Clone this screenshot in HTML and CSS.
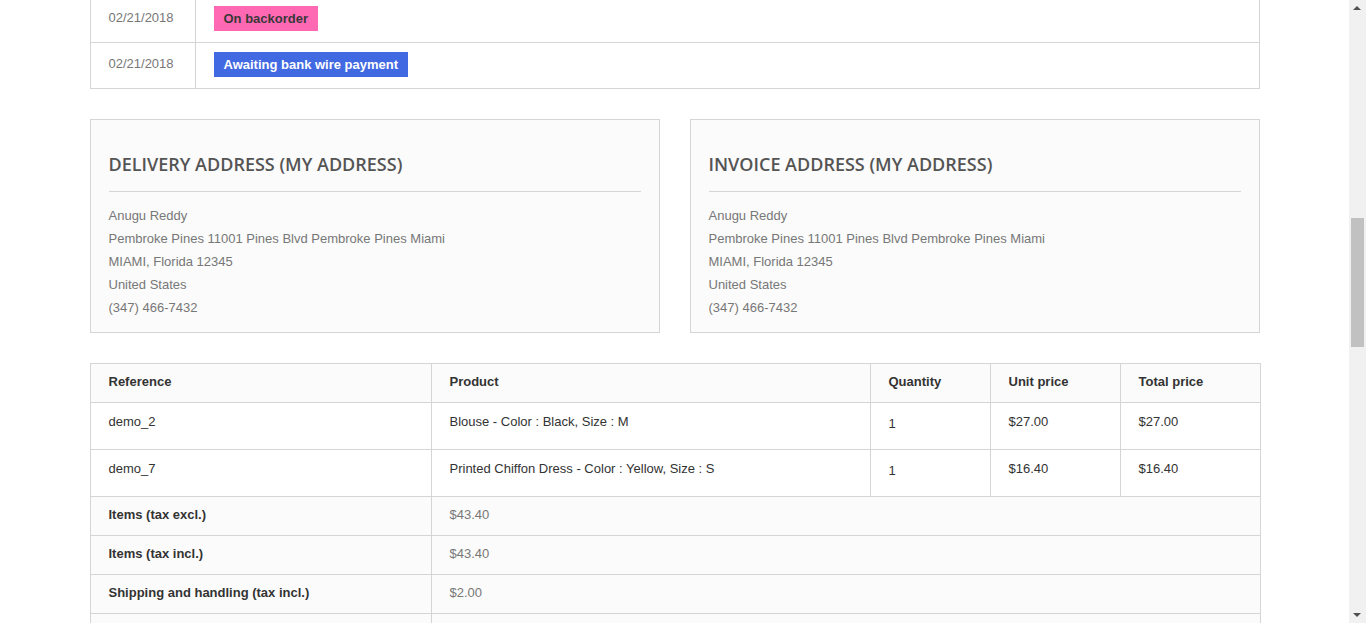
FILE: index.html
```html
<!DOCTYPE html>
<html lang="en">
<head>
<meta charset="utf-8">
<title>Order details</title>
<link rel="stylesheet" href="styles.css">
</head>
<body>
<div class="page">
  <div class="container">
    <table class="history">
      <colgroup><col class="c-date"><col></colgroup>
      <tbody>
        <tr>
          <td class="date">02/21/2018</td>
          <td class="state"><span class="label label-pink">On backorder</span></td>
        </tr>
        <tr>
          <td class="date">02/21/2018</td>
          <td class="state"><span class="label label-blue">Awaiting bank wire payment</span></td>
        </tr>
      </tbody>
    </table>

    <div class="addresses">
      <ul class="address">
        <li><h3 class="subheading">Delivery address (My address)</h3></li>
        <li>Anugu Reddy</li>
        <li>Pembroke Pines 11001 Pines Blvd Pembroke Pines Miami</li>
        <li>MIAMI, Florida 12345</li>
        <li>United States</li>
        <li>(347) 466-7432</li>
      </ul>
      <ul class="address">
        <li><h3 class="subheading">Invoice address (My address)</h3></li>
        <li>Anugu Reddy</li>
        <li>Pembroke Pines 11001 Pines Blvd Pembroke Pines Miami</li>
        <li>MIAMI, Florida 12345</li>
        <li>United States</li>
        <li>(347) 466-7432</li>
      </ul>
    </div>

    <table class="details">
      <colgroup>
        <col class="c-ref"><col class="c-prod"><col class="c-qty"><col class="c-unit"><col class="c-total">
      </colgroup>
      <thead>
        <tr>
          <th>Reference</th>
          <th>Product</th>
          <th>Quantity</th>
          <th>Unit price</th>
          <th>Total price</th>
        </tr>
      </thead>
      <tbody>
        <tr>
          <td>demo_2</td>
          <td>Blouse - Color : Black, Size : M</td>
          <td class="qty">1</td>
          <td>$27.00</td>
          <td>$27.00</td>
        </tr>
        <tr>
          <td>demo_7</td>
          <td>Printed Chiffon Dress - Color : Yellow, Size : S</td>
          <td class="qty">1</td>
          <td>$16.40</td>
          <td>$16.40</td>
        </tr>
      </tbody>
      <tfoot>
        <tr>
          <td class="flabel">Items (tax excl.)</td>
          <td class="fvalue" colspan="4">$43.40</td>
        </tr>
        <tr>
          <td class="flabel">Items (tax incl.)</td>
          <td class="fvalue" colspan="4">$43.40</td>
        </tr>
        <tr>
          <td class="flabel">Shipping and handling (tax incl.)</td>
          <td class="fvalue" colspan="4">$2.00</td>
        </tr>
        <tr class="frow-empty">
          <td class="flabel"></td>
          <td class="fvalue" colspan="4"></td>
        </tr>
      </tfoot>
    </table>
  </div>
</div>

<div class="scrollbar" aria-hidden="true">
  <div class="sb-up"></div>
  <div class="sb-track"><div class="sb-thumb"></div></div>
  <div class="sb-down"></div>
</div>
</body>
</html>
```

FILE: styles.css
```css
html, body {
  margin: 0;
  padding: 0;
  height: 100%;
  overflow: hidden;
  background: #fff;
}

body {
  font-family: "Liberation Sans", Arial, sans-serif;
  font-size: 13px;
  line-height: 18px;
  color: #333;
}

.page {
  margin-right: 17px;
}

.container {
  width: 1170px;
  margin: -4px auto 0;
}

/* ---------- history table ---------- */
table {
  border-collapse: collapse;
  border-spacing: 0;
  width: 100%;
  table-layout: fixed;
}

.history {
  border: 1px solid #d6d4d4;
  margin-bottom: 30px;
}

.history .c-date { width: 105px; }

.history td {
  border: 1px solid #d6d4d4;
  padding: 9px 8px 11px 18px;
  vertical-align: top;
}

.history .date {
  color: #777;
  padding-top: 12px;
}

.label {
  display: inline-block;
  padding: 5px 10px 4px;
  line-height: 16px;
  font-weight: bold;
  font-size: 13px;
  vertical-align: top;
}

.label-pink {
  background: #ff69b4;
  color: #383838;
}

.label-blue {
  background: #4169e1;
  color: #fff;
}

/* ---------- addresses ---------- */
.addresses {
  display: flex;
  gap: 30px;
  margin-bottom: 30px;
}

.address {
  flex: 1;
  list-style: none;
  margin: 0;
  padding: 32px 18px 13px;
  border: 1px solid #d6d4d4;
  background: #fbfbfb;
  color: #777;
  line-height: 23px;
}

.subheading {
  margin: 0 0 12px;
  padding: 0 0 15px;
  border-bottom: 1px solid #d6d4d4;
  font-family: "Open Sans", "Liberation Sans", sans-serif;
  font-weight: 600;
  font-size: 18px;
  line-height: normal;
  text-transform: uppercase;
  color: #555454;
}

/* ---------- details table ---------- */
.details {
  border: 1px solid #d6d4d4;
}

.details .c-ref { width: 341px; }
.details .c-prod { width: 439px; }
.details .c-qty { width: 120px; }
.details .c-unit { width: 130px; }
.details .c-total { width: 140px; }

.details th,
.details td {
  border: 1px solid #d6d4d4;
  padding: 9px 8px 11px 18px;
  text-align: left;
  vertical-align: top;
}

.details thead th {
  background: #fbfbfb;
  font-weight: bold;
  color: #333;
}

.details tbody td {
  padding-top: 10px;
  padding-bottom: 18px;
  background: #fff;
}

.details tbody td.qty {
  padding-top: 12px;
  padding-bottom: 16px;
}

.details tfoot td {
  background: #fbfbfb;
}

.details .frow-empty td {
  height: 18px;
}

.details .flabel {
  font-weight: bold;
  color: #333;
}

.details .fvalue {
  color: #777;
}

/* ---------- fake browser scrollbar (overlay) ---------- */
.scrollbar {
  position: fixed;
  top: 0;
  right: 0;
  width: 17px;
  height: 100%;
  background: #f1f1f1;
  display: flex;
  flex-direction: column;
}

.sb-up,
.sb-down {
  height: 17px;
  position: relative;
  flex: none;
}

.sb-up::after,
.sb-down::after {
  content: "";
  position: absolute;
  left: 4px;
  width: 0;
  height: 0;
  border-left: 4px solid transparent;
  border-right: 4px solid transparent;
}

.sb-up::after {
  top: 6px;
  border-bottom: 4px solid #505050;
}

.sb-down::after {
  bottom: 6px;
  border-top: 4px solid #505050;
}

.sb-track {
  flex: 1;
  position: relative;
}

.sb-thumb {
  position: absolute;
  left: 2px;
  right: 2px;
  top: 201px;
  height: 129px;
  background: #c1c1c1;
}
```
